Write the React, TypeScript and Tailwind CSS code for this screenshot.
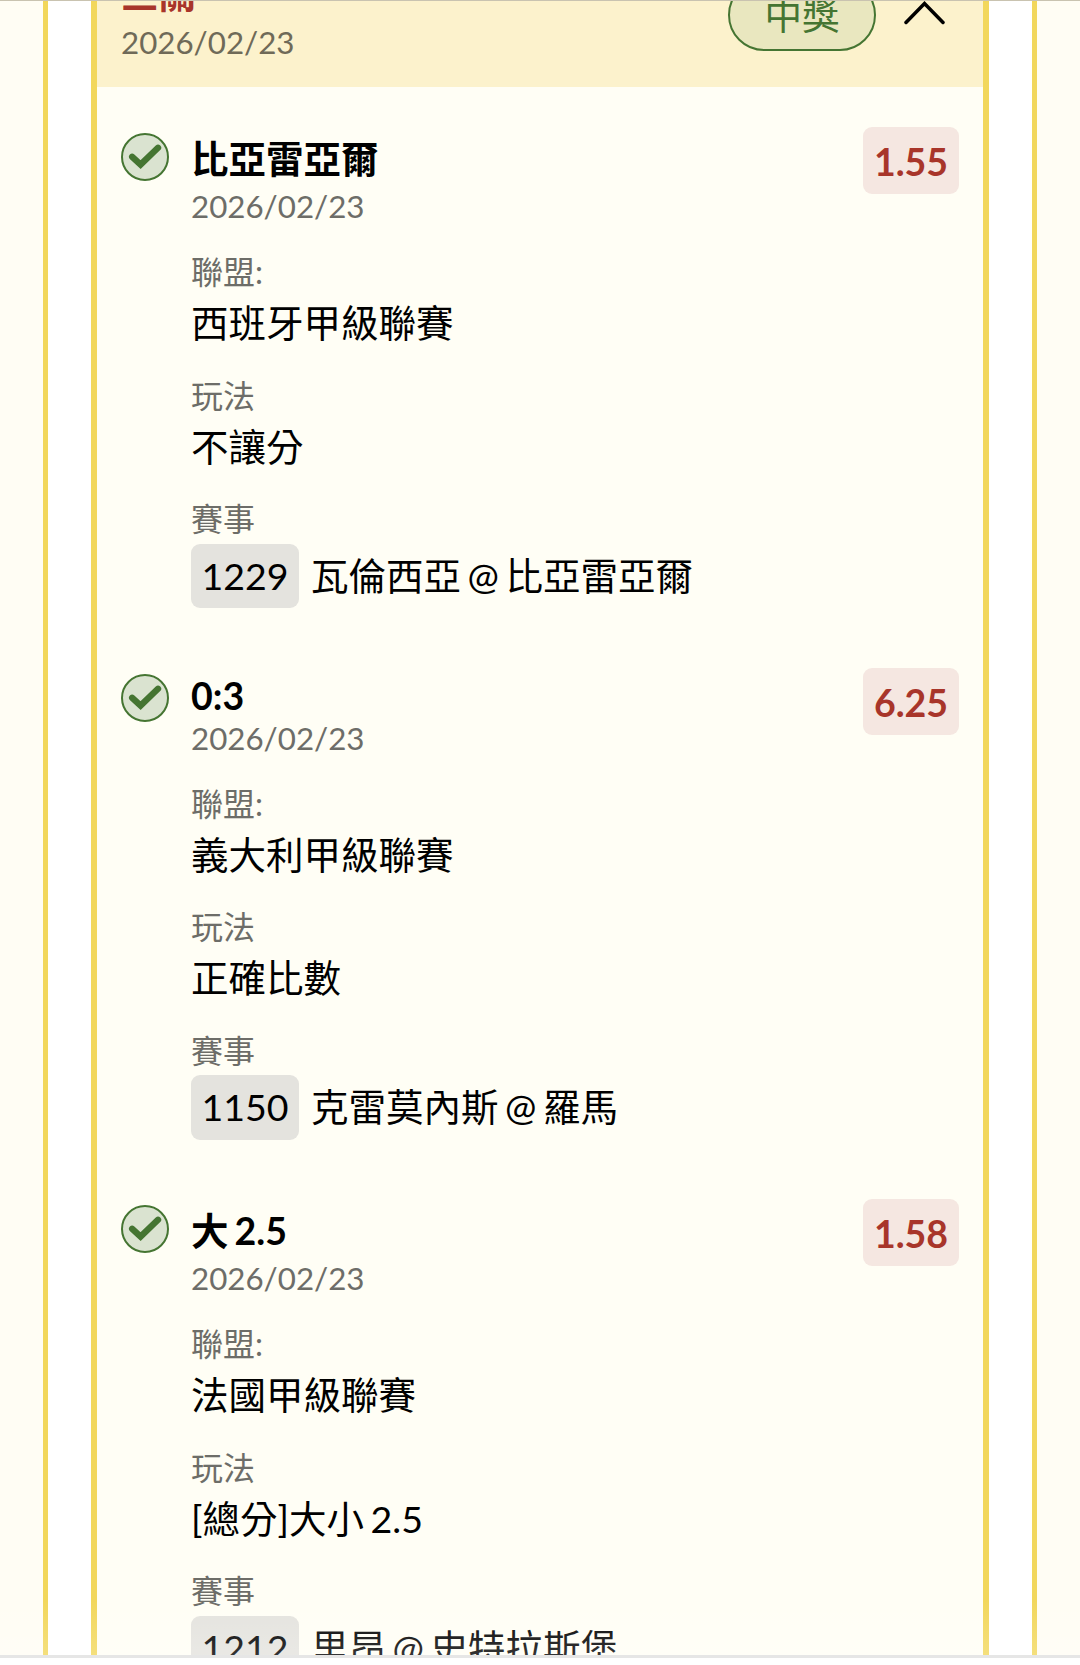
type Leg = {
  pick: string;
  latin?: boolean;
  date: string;
  odds: string;
  league: string;
  market: string;
  code: string;
  match: string;
};

const legs: Leg[] = [
  {
    pick: "比亞雷亞爾",
    date: "2026/02/23",
    odds: "1.55",
    league: "西班牙甲級聯賽",
    market: "不讓分",
    code: "1229",
    match: "瓦倫西亞 @ 比亞雷亞爾",
  },
  {
    pick: "0:3",
    latin: true,
    date: "2026/02/23",
    odds: "6.25",
    league: "義大利甲級聯賽",
    market: "正確比數",
    code: "1150",
    match: "克雷莫內斯 @ 羅馬",
  },
  {
    pick: "大 2.5",
    date: "2026/02/23",
    odds: "1.58",
    league: "法國甲級聯賽",
    market: "[總分]大小 2.5",
    code: "1212",
    match: "里昂 @ 史特拉斯堡",
  },
];

export default function App() {
  return (
    <main
      lang="zh-Hant"
      className="flex h-[1665px] w-[1080px] flex-col overflow-hidden bg-white font-['Lato','Noto_Sans_CJK_TC',sans-serif] text-[37.5px] text-black [word-spacing:-3px]"
    >
      <div className="relative h-[1655px] overflow-hidden border-t border-[#c9c3b0] bg-[#fffdf4]">
        <div className="mx-[43px] flex h-full border-x-[5px] border-[#f2d75c] bg-white pr-[43px] pl-[43px]">
          <section className="w-full border-x-[6px] border-[#f2d75c] bg-[#fffef5]">
            <TicketHeader />
            <div className="flex flex-col gap-[59.5px] pt-[40px] pr-6 pl-6">
              {legs.map((leg) => (
                <LegRow key={leg.code} leg={leg} />
              ))}
            </div>
          </section>
        </div>
        <div className="absolute inset-x-0 bottom-0 h-14 bg-linear-to-b from-white/0 to-white/20" />
      </div>
      <div className="h-[3px] shrink-0 bg-[#e6e6e6]" />
    </main>
  );
}

function TicketHeader() {
  return (
    <header className="flex h-[86px] items-end justify-between bg-[#fcf2cc] pr-[38px] pl-6">
      <div className="pb-[25px]">
        <h2 className="h-[57px] leading-[58px] font-bold text-[#a8352a]">
          三關
        </h2>
        <p className="h-10 text-[31.3px] leading-10 text-[#6f6a58]">
          2026/02/23
        </p>
      </div>
      <div className="flex items-end gap-[28px] pb-9">
        <span className="flex h-[72px] w-[148px] items-center justify-center rounded-full border-[2.5px] border-[#457532] bg-[#e9e7bf] text-[#457532]">
          中獎
        </span>
        <svg
          className="mb-[26px]"
          width="41"
          height="26"
          viewBox="0 0 41 26"
          fill="none"
          stroke="black"
          strokeWidth="3.5"
          strokeLinecap="round"
        >
          <path d="M2 23.5 20.5 4.5 39 23.5" />
        </svg>
      </div>
    </header>
  );
}

function LegRow({ leg }: { leg: Leg }) {
  return (
    <article className="flex items-start">
      <WonIcon />
      <div className="ml-[22px] flex-1 pt-[5px]">
        <h3
          className={
            leg.latin
              ? "h-[45px] leading-[46px] font-bold"
              : "h-[54px] leading-[54px] font-bold"
          }
        >
          {leg.pick}
        </h3>
        <p className="h-10 text-[31.3px] leading-10 text-[#6d6d68]">
          {leg.date}
        </p>
        <dl className="mt-[23px]">
          <Field label="聯盟:" value={leg.league} />
          <Field label="玩法" value={leg.market} />
          <dt className="h-[47.5px] text-[32px] leading-[45px] text-[#6d6d68]">
            賽事
          </dt>
          <dd className="flex items-center gap-3 leading-[64.5px] whitespace-nowrap">
            <span className="h-[64.5px] w-[108px] rounded-[9px] bg-[#e4e3de] text-center">
              {leg.code}
            </span>
            {leg.match}
          </dd>
        </dl>
      </div>
      <span className="h-[67px] w-24 rounded-[9px] bg-[#f5e7e1] text-center leading-[69px] font-bold text-[#a8352a]">
        {leg.odds}
      </span>
    </article>
  );
}

function Field({ label, value }: { label: string; value: string }) {
  return (
    <div className="mb-[21.5px]">
      <dt className="h-[46px] text-[32px] leading-[45px] text-[#6d6d68]">
        {label}
      </dt>
      <dd className="h-14 leading-14">{value}</dd>
    </div>
  );
}

function WonIcon() {
  return (
    <svg className="mt-[6px]" width="48" height="48" viewBox="0 0 48 48">
      <circle
        cx="24"
        cy="24"
        r="23"
        fill="#dae3d0"
        stroke="#457532"
        strokeWidth="2"
      />
      <path
        d="M11.2 23.8 19.6 31.6 37 14.8"
        fill="none"
        stroke="#457532"
        strokeWidth="6.4"
        strokeLinecap="round"
      />
    </svg>
  );
}
